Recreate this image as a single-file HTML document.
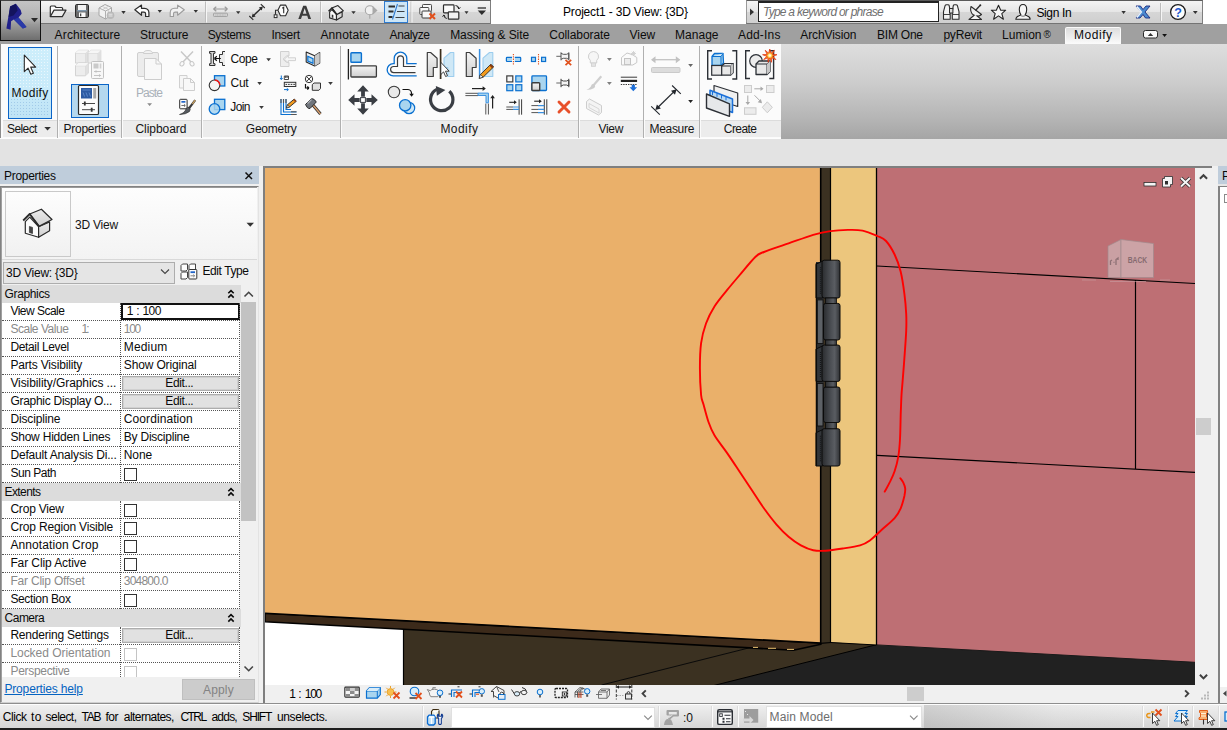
<!DOCTYPE html>
<html>
<head>
<meta charset="utf-8">
<title>Project1 - 3D View: {3D}</title>
<style>
*{box-sizing:border-box;margin:0;padding:0}
html,body{width:1227px;height:730px;overflow:hidden;background:#e6e6e6;font-family:"Liberation Sans",sans-serif;font-size:12px;color:#1a1a1a}
.a{position:absolute}
.t{position:absolute;white-space:nowrap;line-height:14px;height:14px}
svg{position:absolute;overflow:visible}
.ic{position:absolute;overflow:visible}
/* title */
#titlebar{left:0;top:0;width:1227px;height:24px;background:#fff}
#qat{left:40px;top:0;width:451px;height:24px;border-top:1px solid #5a5a5a;background:linear-gradient(#f4f4f4,#e6e6e6 48%,#d6d6d6 52%,#cfcfcf);border-right:1px solid #7e7e7e;border-bottom:1px solid #747474}
#appbtn{left:0;top:0;width:41px;height:41px;background:linear-gradient(#c4c4c4,#b2b2b2 45%,#9a9a9a 60%,#6e6e6e);border:1px solid #111;border-top:1px solid #444}
#info{left:746px;top:0;width:457px;height:24px;background:linear-gradient(#f4f4f4,#e6e6e6 48%,#d6d6d6 52%,#cfcfcf);border:1px solid #7e7e7e;border-bottom-color:#747474;border-top:1px solid #5a5a5a}
#search{left:758px;top:1px;width:181px;height:21px;background:#fff;border:1px solid #222;border-top-width:2px}
#tabbar{left:0;top:24px;width:1227px;height:20px;background:#a0a0a0}
#tabact{left:1065px;top:27px;width:56px;height:17px;background:linear-gradient(#dddddd,#ececec 50%,#fbfbfb);border:1px solid #fafafa;border-bottom:0;border-radius:2px 2px 0 0}
.vsep{position:absolute;width:1px;background:#b4b4b4;border-right:1px solid #f8f8f8;box-sizing:content-box}
/* ribbon */
#ribbon{left:0;top:44px;width:1227px;height:95px;background:linear-gradient(#dedede,#cdcdcd 40%,#b4b4b4 80%,#a5a5a5)}
.panel{position:absolute;top:44px;height:94px;background:#fbfbfb}
.ptitle{position:absolute;top:120px;height:17px;background:#ececec;border-top:1px solid #dcdcdc}
.psep{position:absolute;top:46px;width:1px;height:92px;background:#b0b0b0}
#optbar{left:0;top:139px;width:1227px;height:27px;background:#e3e3e3}
/* properties */
#prop{left:0;top:184px;width:259px;height:519px;background:#f0f0f0}
#prophead{left:0;top:166px;width:259px;height:18px;background:#bfcddb}
.row{position:absolute;left:2px;width:238px;height:18px;background:#fff;border-bottom:1px dotted #555}
.ghead{position:absolute;left:2px;width:238.500px;height:18px;background:#dcdcdc}
.cb{position:absolute;left:124px;width:13px;height:13px;background:#fff;border:1px solid #333}
.cbd{border-color:#c4c4c4}
.ebtn{position:absolute;left:122px;width:117px;height:15px;background:#e1e1e1;border:1px solid #adadad;box-shadow:inset 0 0 0 1px #d0d0d0}
/* status */
#status{left:0;top:703px;width:1227px;height:25px;background:linear-gradient(#efefef,#e4e4e4 45%,#d6d6d6);border-top:2px solid #fbfbfb}
#botstrip{left:0;top:728px;width:1227px;height:2px;background:#1e1e1e}

</style>
</head>
<body>
<!-- TITLE BAR + TABS -->
<div class="a" id="titlebar"></div>
<div class="a" id="tabbar"></div>
<div class="a" id="qat"></div>
<div class="a" id="appbtn"></div>
<div class="a" id="info"></div>
<div class="a" id="search"></div>
<div class="a" id="tabact"></div>
<div class="t" style="left:563.0px;top:5.0px;font-size:12px;color:#000;letter-spacing:-0.18px;">Project1 - 3D View: {3D}</div>
<div class="t" style="left:763.0px;top:5.0px;font-size:12px;color:#707070;letter-spacing:-0.75px;font-style:italic;">Type a keyword or phrase</div>
<div class="t" style="left:1036.4px;top:5.5px;font-size:12px;color:#000;letter-spacing:-0.36px;">Sign In</div>
<div class="t" style="left:54.6px;top:27.5px;font-size:12px;color:#0c0c0c;letter-spacing:0.15px;">Architecture</div>
<div class="t" style="left:140.0px;top:27.5px;font-size:12px;color:#0c0c0c;letter-spacing:-0.02px;">Structure</div>
<div class="t" style="left:207.7px;top:27.5px;font-size:12px;color:#0c0c0c;letter-spacing:-0.45px;">Systems</div>
<div class="t" style="left:271.4px;top:27.5px;font-size:12px;color:#0c0c0c;letter-spacing:-0.28px;">Insert</div>
<div class="t" style="left:320.4px;top:27.5px;font-size:12px;color:#0c0c0c;letter-spacing:0.14px;">Annotate</div>
<div class="t" style="left:389.6px;top:27.5px;font-size:12px;color:#0c0c0c;letter-spacing:-0.38px;">Analyze</div>
<div class="t" style="left:450.2px;top:27.5px;font-size:12px;color:#0c0c0c;letter-spacing:-0.09px;">Massing &amp; Site</div>
<div class="t" style="left:549.3px;top:27.5px;font-size:12px;color:#0c0c0c;letter-spacing:-0.07px;">Collaborate</div>
<div class="t" style="left:629.6px;top:27.5px;font-size:12px;color:#0c0c0c;letter-spacing:-0.06px;">View</div>
<div class="t" style="left:675.0px;top:27.5px;font-size:12px;color:#0c0c0c;letter-spacing:0.03px;">Manage</div>
<div class="t" style="left:738.0px;top:27.5px;font-size:12px;color:#0c0c0c;letter-spacing:0.17px;">Add-Ins</div>
<div class="t" style="left:800.3px;top:27.5px;font-size:12px;color:#0c0c0c;letter-spacing:-0.10px;">ArchVision</div>
<div class="t" style="left:877.0px;top:27.5px;font-size:12px;color:#0c0c0c;letter-spacing:-0.22px;">BIM One</div>
<div class="t" style="left:943.4px;top:27.5px;font-size:12px;color:#0c0c0c;letter-spacing:-0.20px;">pyRevit</div>
<div class="t" style="left:1002.0px;top:27.5px;font-size:12px;color:#0c0c0c;letter-spacing:0.03px;">Lumion</div>
<div class="t" style="left:1074.0px;top:27.5px;font-size:12px;color:#0c0c0c;letter-spacing:0.53px;">Modify</div>
<div class="t" style="left:1043.500px;top:28px;font-size:10px;color:#111">&#174;</div>
<svg class="a" style="left:0;top:0" width="1227" height="46" viewBox="0 0 1227 46">
<polygon points="15.9,3.7 10.1,6.4 6.4,28.6 10.6,29.7 11.1,21.2 13.8,19.6 22.8,28.6 26.5,27 18.5,17.5 21.7,13.8 20.7,10.1" fill="#20208a"/>
<polygon points="15.9,3.7 10.1,6.4 8.6,17 13.5,15.5 17.6,10.5" fill="#14145e"/>
<polygon points="13.8,19.6 22.8,28.6 26.5,27 18.5,17.5" fill="#2a3aa8"/>
<path d="M31 18h7l-3.5 4.2z" fill="#2a2a2a"/>
<path d="M50.3 16.6v-9.600q0-1 1-1h3.500l1.300 1.500h5.500q1 0 1 1v1.500" fill="#fdfdfd" stroke="#2e2e2e" stroke-width="1.2" stroke-linejoin="round"/>
<path d="M50.3 16.600l3.700-6.500h12l-3.700 6.500z" fill="#ececec" stroke="#2e2e2e" stroke-width="1.200" stroke-linejoin="round"/>
<rect x="75.5" y="4.500" width="13" height="13" rx="1.200" fill="#6a6a6a" stroke="#2a2a2a" stroke-width="1"/>
<rect x="78" y="5" width="8" height="5" fill="#f2f2f2"/>
<rect x="79" y="12.500" width="6.500" height="4.500" fill="#fafafa"/><rect x="80" y="13.500" width="1.300" height="2.800" fill="#444"/>
<path d="M77.200 10.800h9.600" stroke="#8fb6d8" stroke-width="0.900"/>
<path d="M99 8l6-3.500 6.500 3v7.500l-6 4-6.500-3.500z" fill="#f2f2f2" stroke="#a6a6a6" stroke-width="1"/><path d="M99 8l6.500 3 6-3M105.500 11v8" fill="none" stroke="#b0b0b0" stroke-width="1"/><path d="M102 6.300l6.300 3v7.500M108.800 6l-6.300 3.700" fill="none" stroke="#c4c4c4" stroke-width="0.800"/><circle cx="110.500" cy="15.300" r="3.800" fill="#b9b9b9"/><path d="M108.500 14.200h4M108.500 16h4" stroke="#eee" stroke-width="0.900"/>
<path d="M121.3 11.1h4.4l-2.2 2.8z" fill="#333"/>
<path d="M134.800 9.800l6.700-4.700v3.200h3q4.400 0.200 4.400 4.500v3.700h-3.300v-2.800q0-1.600-1.700-1.600h-2.400v3.200z" fill="#fdfdfd" stroke="#2c2c2c" stroke-width="1.200" stroke-linejoin="round"/>
<path d="M157.6 10h4.4l-2.2 2.8z" fill="#333"/>
<path d="M184.300 9.800l-6.700-4.700v3.200h-3q-4.400 0.200-4.400 4.500v3.700h3.300v-2.800q0-1.600 1.700-1.600h2.400v3.200z" fill="#f2f2f2" stroke="#9c9c9c" stroke-width="1.100" stroke-linejoin="round"/>
<path d="M193.6 10h4.4l-2.2 2.8z" fill="#333"/>
<path d="M205.500 1.500v21" stroke="#bdbdbd"/><path d="M206.500 1.500v21" stroke="#f6f6f6"/>
<path d="M213.500 9h14M213.500 9l2.800-2.200M213.500 9l2.800 2.200M227.500 9l-2.800-2.200M227.500 9l-2.800 2.200" stroke="#9a9a9a" stroke-width="1.200" fill="none"/><rect x="213.500" y="13.200" width="14" height="3.300" rx="0.800" fill="#d2d2d2" stroke="#9e9e9e" stroke-width="0.900"/><path d="M215.500 15h10" stroke="#a8a8a8" stroke-width="1" stroke-dasharray="0.800 0.800"/>
<path d="M236 11.2h4.4l-2.2 2.8z" fill="#333"/>
<path d="M252.500 16.500l9.500-9" stroke="#2c2c2c" stroke-width="1.400"/><path d="M249.300 16l4 3.800M260.800 4.200l4 3.800" stroke="#2c2c2c" stroke-width="1.100"/><path d="M251.700 17.400l1-4 3 3zM262.800 6.600l-1 4-3-3z" fill="#2c2c2c"/>
<path d="M277.900 10.300l2.600-5.200h5.100l2.600 5.200-2.600 5.400h-5.100z" fill="#fdfdfd" stroke="#2c2c2c" stroke-width="1.100" stroke-linejoin="round"/><path d="M282.200 8.300l1.500-1v6" stroke="#2c2c2c" stroke-width="1.100" fill="none"/><path d="M277.900 10.300h-2.400v4.500" stroke="#2c2c2c" stroke-width="1.100" fill="none"/><rect x="274.200" y="14.800" width="2.800" height="2.800" fill="#fff" stroke="#2c2c2c" stroke-width="1"/>
<path d="M298.300 19l4.900-13.200h3l4.900 13.200h-2.800l-1.100-3.200h-5.100l-1.100 3.200zM302.900 13.700h3.600l-1.800-5.400z" fill="#3c3c3c"/>
<path d="M320.500 1.500v21" stroke="#bdbdbd"/><path d="M321.500 1.500v21" stroke="#f6f6f6"/>
<g transform="translate(316.600 -102.200) scale(0.515)"><path d="M25.300 221.600l4.400-4.500 8.900 9.600v10.600l-13.300-4.100z" fill="#fbfbfb" stroke="#2a2a2a" stroke-width="2.200" stroke-linejoin="round"/><path d="M38.600 226.700l11-4.800v8.900l-11 6.500z" fill="#dadada" stroke="#2a2a2a" stroke-width="2.200" stroke-linejoin="round"/><path d="M29.700 214l11.700-4.800 10.600 10.300-13 6.900z" fill="#ececec" stroke="#2a2a2a" stroke-width="2.200" stroke-linejoin="round"/><path d="M23.200 220.500l6.500-6.500 9.300 12.400" fill="none" stroke="#2a2a2a" stroke-width="2.800" stroke-linejoin="round"/><path d="M29.400 226.400l3.100 1v6.200l-3.100-1.100z" fill="#333"/></g>
<path d="M351.3 11.2h4.4l-2.2 2.8z" fill="#333"/>
<circle cx="369.800" cy="10.300" r="4.500" fill="#f1f1f1" stroke="#a6a6a6" stroke-width="1.100"/><path d="M372.500 5.800l5 4.600-5 4.500z" fill="#a9a9a9"/><path d="M369.800 14.800v4" stroke="#a6a6a6" stroke-width="1.100"/>
<rect x="384.500" y="1.500" width="23" height="21" fill="#cde6f7" stroke="#2f7bd0" stroke-width="1"/>
<path d="M388.500 6.500h6.500M388.500 11.500h5M388.500 17h4" stroke="#2c2c2c" stroke-width="2.200"/><path d="M398.500 6h6M397 11.500h7.500M395.500 17.500h9" stroke="#2c2c2c" stroke-width="0.900"/><path d="M397.500 4l-5 15.500" stroke="#2f7bd0" stroke-width="1.100"/>
<path d="M411 1.500v21" stroke="#bdbdbd"/><path d="M412 1.500v21" stroke="#f6f6f6"/>
<rect x="422.500" y="4.500" width="9" height="7" rx="0.800" fill="#f8f8f8" stroke="#4a4a4a" stroke-width="1"/><rect x="419.800" y="7.500" width="9" height="7" rx="0.800" fill="#f8f8f8" stroke="#4a4a4a" stroke-width="1"/><rect x="422" y="11" width="9" height="7" rx="0.800" fill="#f8f8f8" stroke="#3a3a3a" stroke-width="1"/><path d="M429.500 13.500l5.500 5.500M435 13.500l-5.500 5.500" stroke="#e2501c" stroke-width="2"/>
<rect x="443.500" y="4.800" width="10.500" height="8" rx="0.800" fill="#fbfbfb" stroke="#2c2c2c" stroke-width="1.200"/><rect x="448.300" y="11.800" width="10.500" height="7.400" rx="0.800" fill="#f1f1f1" stroke="#2c2c2c" stroke-width="1.200"/><path d="M455.500 5.500q3.200 0.200 3.500 3.300M459 8.800l-1.500-1.400M459 8.800l1.300-1.500M446.800 18.500q-2.800-0.400-3-3.400M443.800 15.100l-1.300 1.500M443.800 15.100l1.500 1.400" stroke="#1c1c1c" stroke-width="1" fill="none"/>
<path d="M464.5 11.2h4l-2.0 2.7z" fill="#333"/>
<path d="M477.700 8h8.300" stroke="#2c2c2c" stroke-width="1.300"/><path d="M477.7 10.6h8.3l-4.15 4.3z" fill="#2c2c2c"/>
<path d="M746.5 0.500v22" stroke="#9a9a9a"/><path d="M750 8.500l4 3.500-4 3.500z" fill="#333"/>
<path d="M943.500 19.200v-7.500l1.600-6q0.300-1 1.400-1h1.500q1 0 1.200 1l1 6v7.500zM952.300 19.200v-7.500l1-6q0.200-1 1.200-1h1.500q1.100 0 1.400 1l1.600 6v7.500z" fill="#f4f4f4" stroke="#2c2c2c" stroke-width="1.100" stroke-linejoin="round"/><rect x="949.500" y="8.500" width="3.400" height="4.500" fill="#ddd" stroke="#2c2c2c" stroke-width="1"/><path d="M943.500 14.500h6.500M952.500 14.500h6.500" stroke="#2c2c2c" stroke-width="0.900"/>
<path d="M971 6.500q-1.500 5.500 2.500 8.500t8-0.500z" fill="#f0f0f0" stroke="#2c2c2c" stroke-width="1.100" stroke-linejoin="round"/><path d="M975.500 10.500l4.500-5" stroke="#2c2c2c" stroke-width="1.300"/><circle cx="980.300" cy="5.300" r="1" fill="#2c2c2c"/><path d="M974.500 15l-5.500 4.500h12.500l-5-4" fill="#f6f6f6" stroke="#2c2c2c" stroke-width="1.100" stroke-linejoin="round"/>
<path d="M998.500 5.200l2.200 5h5l-3.900 3.400 1.600 5.600-4.900-3.300-4.900 3.300 1.600-5.600-3.900-3.400h5z" fill="#f6f6f6" stroke="#222" stroke-width="1.100" stroke-linejoin="round"/>
<path d="M1015.800 19.300q0.200-2.600 3.200-3.500l2-0.800q-1.700-2-1.700-5.500 0-5 3.700-5t3.700 5q0 3.500-1.700 5.500l2 0.800q3 0.900 3.200 3.500z" fill="#f6f6f6" stroke="#222" stroke-width="1.100" stroke-linejoin="round"/><path d="M1021 15.500q2 1.500 4 0" stroke="#999" stroke-width="1.400" fill="none"/>
<path d="M1121.4 11.1h4.4l-2.2 2.8z" fill="#333"/>
<path d="M1136 6h4.500l2.500 3.500 3-3.500h4l-5 6 5 6h-4.500l-2.500-3.500-3 3.500h-4l5-6z" fill="#4a8ad0" stroke="#1c2a80" stroke-width="0.900" stroke-linejoin="round"/><path d="M1136.800 6.500l4.500 5.500-4.500 5.500" fill="none" stroke="#e8f0fa" stroke-width="1.600"/>
<path d="M1160.500 3v18" stroke="#bdbdbd"/><path d="M1161.500 3v18" stroke="#f6f6f6"/>
<circle cx="1178" cy="12" r="7.400" fill="#fdfdfd" stroke="#1c1c1c" stroke-width="1.300"/><text x="1178" y="16.500" font-family="Liberation Sans, sans-serif" font-size="12.500" font-weight="bold" fill="#1c5ad0" text-anchor="middle">?</text>
<path d="M1192.9 11.1h4.8l-2.4 3z" fill="#333"/>
<rect x="1143.500" y="30.500" width="14" height="7.500" rx="2" fill="#fafafa" stroke="#2a2a2a" stroke-width="1"/><path d="M1147.800 36l2.700-3 2.700 3z" fill="#333"/><path d="M1162.2 33.9h4.8l-2.4 3z" fill="#111"/>
</svg>
<!-- RIBBON -->
<div class="a" id="ribbon"></div>
<div class="a" style="left:0;top:44px;width:781px;height:95px;background:#fbfbfb"></div>
<div class="a" style="left:0;top:44px;width:1px;height:95px;background:#8c8c8c"></div>
<div class="ptitle" style="left:3px;width:54px"></div>
<div class="ptitle" style="left:59px;width:62px"></div>
<div class="ptitle" style="left:123px;width:78px"></div>
<div class="ptitle" style="left:203px;width:137px"></div>
<div class="ptitle" style="left:342px;width:236px"></div>
<div class="ptitle" style="left:580px;width:63px"></div>
<div class="ptitle" style="left:645px;width:54px"></div>
<div class="ptitle" style="left:701px;width:80px"></div>
<div class="psep" style="left:57px"></div>
<div class="psep" style="left:121px"></div>
<div class="psep" style="left:201px"></div>
<div class="psep" style="left:340px"></div>
<div class="psep" style="left:578px"></div>
<div class="psep" style="left:643px"></div>
<div class="psep" style="left:699px"></div>
<div class="a" style="left:0;top:138px;width:781px;height:1px;background:#fdfdfd"></div>
<div class="a" id="optbar"></div>
<div class="a" style="left:8px;top:47px;width:44px;height:72px;background:linear-gradient(#cdeefb,#c9ebfa 55%,#bfe3f5);border:1px solid #0a64c8"></div>
<div class="a" style="left:10px;top:49px;width:40px;height:40px;background-image:radial-gradient(rgba(255,255,255,0.6) 0.6px,rgba(255,255,255,0) 0.9px);background-size:3px 3px"></div>
<div class="a" style="left:10px;top:98px;width:40px;height:19px;background-image:radial-gradient(rgba(120,170,215,0.45) 0.6px,rgba(120,170,215,0) 0.9px);background-size:3px 3px"></div>
<div class="a" style="left:71px;top:84px;width:38px;height:34px;background:#b4d8ef;border:1px solid #0a64c8"></div>
<div class="t" style="left:11.5px;top:86.0px;font-size:12px;color:#101010;letter-spacing:0.27px;">Modify</div>
<div class="t" style="left:7.1px;top:121.5px;font-size:12px;color:#151515;letter-spacing:-0.61px;">Select</div>
<div class="t" style="left:63.6px;top:121.5px;font-size:12px;color:#151515;letter-spacing:-0.28px;">Properties</div>
<div class="t" style="left:135.4px;top:121.5px;font-size:12px;color:#151515;letter-spacing:-0.03px;">Clipboard</div>
<div class="t" style="left:245.8px;top:121.5px;font-size:12px;color:#151515;letter-spacing:-0.23px;">Geometry</div>
<div class="t" style="left:440.4px;top:121.5px;font-size:12px;color:#151515;letter-spacing:0.45px;">Modify</div>
<div class="t" style="left:598.5px;top:121.5px;font-size:12px;color:#151515;letter-spacing:-0.30px;">View</div>
<div class="t" style="left:649.5px;top:121.5px;font-size:12px;color:#151515;letter-spacing:-0.31px;">Measure</div>
<div class="t" style="left:723.8px;top:121.5px;font-size:12px;color:#151515;letter-spacing:-0.56px;">Create</div>
<div class="t" style="left:135.9px;top:85.8px;font-size:12px;color:#a9b0b8;letter-spacing:-0.90px;">Paste</div>
<div class="t" style="left:230.6px;top:51.7px;font-size:12px;color:#101010;letter-spacing:-0.43px;">Cope</div>
<div class="t" style="left:230.6px;top:75.7px;font-size:12px;color:#101010;letter-spacing:-0.34px;">Cut</div>
<div class="t" style="left:230.3px;top:99.8px;font-size:12px;color:#101010;letter-spacing:-0.64px;">Join</div>
<svg class="a" style="left:0;top:0" width="1227" height="140" viewBox="0 0 1227 140">
<defs><linearGradient id="gg" x1="0" y1="0" x2="0" y2="1"><stop offset="0" stop-color="#f4f4f4"/><stop offset="1" stop-color="#cfcfcf"/></linearGradient></defs>
<path d="M24.300 55.200v16.500l3.800-3.600 2.700 6.200 2.600-1.100-2.700-6.100h5z" fill="#fff" stroke="#2a2a2a" stroke-width="1.100" stroke-linejoin="round"/>
<path d="M44.3 127h6.5l-3.25 3.6z" fill="#333"/>
<path d="M75.5 53.099999999999994l2.8 -2.8h10v10l-2.8 2.8h-10z" fill="#ededed" stroke="#cfcfcf" stroke-width="0.900" stroke-linejoin="round"/><path d="M75.5 53.099999999999994h10l2.8 -2.8M85.5 53.099999999999994v10" fill="none" stroke="#d6d6d6" stroke-width="0.800"/><path d="M85.5 53.099999999999994l2.8 -2.8v10l-2.8 2.8z" fill="#e0e0e0"/><path d="M75.5 53.099999999999994l2.8 -2.8h10l-2.8 2.8z" fill="#f6f6f6"/><path d="M88 53.099999999999994l2.8 -2.8h10v10l-2.8 2.8h-10z" fill="#ededed" stroke="#cfcfcf" stroke-width="0.900" stroke-linejoin="round"/><path d="M88 53.099999999999994h10l2.8 -2.8M98 53.099999999999994v10" fill="none" stroke="#d6d6d6" stroke-width="0.800"/><path d="M98 53.099999999999994l2.8 -2.8v10l-2.8 2.8z" fill="#e0e0e0"/><path d="M88 53.099999999999994l2.8 -2.8h10l-2.8 2.8z" fill="#f6f6f6"/><path d="M75.5 65.8l2.8 -2.8h10v10l-2.8 2.8h-10z" fill="#ededed" stroke="#cfcfcf" stroke-width="0.900" stroke-linejoin="round"/><path d="M75.5 65.8h10l2.8 -2.8M85.5 65.8v10" fill="none" stroke="#d6d6d6" stroke-width="0.800"/><path d="M85.5 65.8l2.8 -2.8v10l-2.8 2.8z" fill="#e0e0e0"/><path d="M75.5 65.8l2.8 -2.8h10l-2.8 2.8z" fill="#f6f6f6"/>
<rect x="91.500" y="61.500" width="12" height="17" rx="1" fill="#f7f7f7" stroke="#c2c2c2" stroke-width="1"/><rect x="93.500" y="63.500" width="5" height="5" fill="#cacaca"/><path d="M100.500 63.500v5" stroke="#d0d0d0" stroke-width="1.600"/><path d="M94 71.500h7M94 75.500h7M96 70.300v2.400M99.500 74.300v2.400" stroke="#bdbdbd" stroke-width="0.900"/>
<rect x="78.500" y="85.500" width="20" height="29" rx="1" fill="#fbfbfb" stroke="#2a2a2a" stroke-width="1.200"/><rect x="81" y="88" width="11" height="10.500" fill="#2c5aa2"/><path d="M82.500 90h8M83 92.500l1.500 4M86 92.500l1.500 4M89 92.500l1.500 4" stroke="#6f9ad8" stroke-width="0.700" fill="none"/><rect x="93.200" y="88" width="3" height="10.500" fill="#a8a8a8"/><path d="M82 103.500h13M82 109.700h13" stroke="#333" stroke-width="0.900"/><path d="M84.800 101.500v4M91.700 107.700v4" stroke="#333" stroke-width="1.800"/>
<rect x="137.500" y="52.500" width="21" height="24" rx="1.500" fill="#ececec" stroke="#cfcfcf" stroke-width="1"/><path d="M143.500 53.500q0-3 4.500-3t4.500 3z" fill="#f2f2f2" stroke="#cfcfcf" stroke-width="1"/><path d="M144.500 58.500h11.500l5.500 5.500v15.500h-17z" fill="#f8f8f8" stroke="#cdcdcd" stroke-width="1"/><path d="M156 58.500v5.500h5.500" fill="none" stroke="#cdcdcd" stroke-width="1"/>
<path d="M147.2 103.3h4.8l-2.4 2.8z" fill="#8a8a8a"/>
<path d="M181 51.500l10.500 11M193 51.500l-10.500 11" stroke="#c8c8c8" stroke-width="1.500"/><ellipse cx="182" cy="63.800" rx="1.900" ry="2.300" transform="rotate(35 182 63.800)" fill="#fafafa" stroke="#c8c8c8" stroke-width="1"/><ellipse cx="192" cy="63.800" rx="1.900" ry="2.300" transform="rotate(-35 192 63.800)" fill="#fafafa" stroke="#c8c8c8" stroke-width="1"/>
<path d="M179.500 75.500h7.500v12.500h-7.500z" fill="#f6f6f6" stroke="#d0d0d0"/><path d="M183.500 78.500h7l4 4v8h-11z" fill="#f8f8f8" stroke="#cdcdcd"/><path d="M190.500 78.500v4h4" fill="none" stroke="#cdcdcd"/>
<rect x="179.700" y="99.300" width="7.400" height="9.500" rx="0.800" fill="#fbfbfb" stroke="#2a2a2a" stroke-width="1"/><rect x="181.400" y="101" width="4" height="1.700" fill="#1e63c8"/><path d="M181.400 105.500h3.500M184 104.300l1.300 1.200-1.300 1.200" stroke="#333" stroke-width="0.700" fill="none"/><path d="M195.200 100.200l-6.800 9" stroke="#3a3a3a" stroke-width="2.200"/><path d="M195.200 100.200l-2.800 3.700" stroke="#c8a060" stroke-width="1.300"/><path d="M189.300 107.500q1.800 1.800 0.200 4-3.500 3-10 3 5.500-1.500 6.800-6.300 1.500-1.700 3-0.700z" fill="#55595e" stroke="#2a2a2a" stroke-width="0.600"/>
<path d="M209.500 51.500h5.500v1.800h-1.500v10.400h1.500v1.800h-5.500v-1.800h1.500v-10.400h-1.500z" fill="#d8d8d8" stroke="#333" stroke-width="1" stroke-linejoin="round"/><path d="M225 51.500h-2.500v3h-3v8h3v3h2.500" fill="#ececec" stroke="#333" stroke-width="1" stroke-linejoin="round"/><path d="M214.300 58.500h6.500M214.300 58.500l2.500-2.200M214.300 58.500l2.500 2.200" stroke="#111" stroke-width="1.200" fill="none"/>
<path d="M266.3 58.2h4.6l-2.3 3z" fill="#3a3a3a"/>
<rect x="214.500" y="75.700" width="10.300" height="10.300" fill="#a9d5ef" stroke="#0a70d0" stroke-width="1.300"/><circle cx="214.500" cy="85.300" r="5.300" fill="#f4f4f4" stroke="#333" stroke-width="1.100"/><path d="M214.700 80q4.800 0.400 5.100 5" stroke="#f01818" stroke-width="1.500" fill="none"/>
<path d="M257.3 82h4.6l-2.3 3z" fill="#3a3a3a"/>
<rect x="214.500" y="99.300" width="10.300" height="10.300" fill="#a9d5ef" stroke="#0a70d0" stroke-width="1.300"/><circle cx="214.500" cy="109" r="5.300" fill="#a9d5ef" fill-opacity="0.850" stroke="#0a70d0" stroke-width="1.300"/>
<path d="M259.2 106h4.6l-2.3 3z" fill="#3a3a3a"/>
<path d="M280.500 51.500h8.500v4.500h-2.500l-3.500 3.200 3.500 3.200h2.500v4.100h-8.500z" fill="#eeeeee" stroke="#d0d0d0" stroke-width="1" stroke-linejoin="round"/><path d="M284.300 59.200l4-3.700v2.300h7.200v2.800h-7.200v2.300z" fill="#f6f6f6" stroke="#cdcdcd" stroke-width="0.900" stroke-linejoin="round"/>
<path d="M306.200 52l8.500 3.800 5-3.300v10.500l-5 3-8.500-4z" fill="#f2f2f2" stroke="#2a2a2a" stroke-width="1.100" stroke-linejoin="round"/><path d="M314.700 55.800v10.200" stroke="#2a2a2a" stroke-width="1" /><path d="M314.700 55.800l5-3.300v10.500l-5 3z" fill="#c8c8c8"/><path d="M307.800 56.300l5.200 2.300v4.700l-5.200-2.300z" fill="#a9d5ef" stroke="#0a70d0" stroke-width="1.200"/>
<path d="M281.300 75.500v4M281.300 79.500l-1.300-1.500M281.300 79.500l1.300-1.500" stroke="#0a70d0" stroke-width="1" fill="none"/><path d="M284.300 76h4.200v3.500h-4.200zM285.700 76v2M287.100 76v2" stroke="#333" stroke-width="0.900" fill="none"/><rect x="284.300" y="82.300" width="11.500" height="4.200" fill="#f6f6f6" stroke="#333" stroke-width="1"/><path d="M285.500 84.400h9.500" stroke="#333" stroke-width="1" stroke-dasharray="1.600 1"/><path d="M284 89.600h4.300M288.300 89.600l-1.500-1.300M288.300 89.600l-1.500 1.300" stroke="#0a70d0" stroke-width="1" fill="none"/>
<circle cx="309" cy="79" r="3.700" fill="#fafafa" stroke="#333" stroke-width="1"/><path d="M306.400 76.400l5.200 5.200M311.600 76.400l-5.200 5.200" stroke="#333" stroke-width="0.900"/><path d="M305.500 84v4h3.500M309 88l-1.700-1.500M309 88l-1.700 1.500" stroke="#111" stroke-width="1.200" fill="none"/><path d="M312.300 84.700l1.600-1.700h6.600v5.500l-1.600 1.800h-6.600z" fill="#e0e0e0" stroke="#333" stroke-width="1" stroke-linejoin="round"/>
<path d="M328.2 82h4.6l-2.3 3z" fill="#3a3a3a"/>
<path d="M281 99v15.500h15.500M283.500 99v13h13M286 99v10.500h5" stroke="#0a70d0" stroke-width="1.100" fill="none"/><path d="M281 99v4M283.500 99v4M286 99v4" stroke="#555" stroke-width="1.100"/><path d="M291 111.700h5.500M291 114.500h5.500" stroke="#555" stroke-width="1.100"/><path d="M286.500 108l1-3.300 6.800-5.700 2 2.300-6.800 5.700z" fill="#f09a20" stroke="#2a2a2a" stroke-width="0.900" stroke-linejoin="round"/><path d="M286.500 108l1-3.300 2 2.300z" fill="#fff" stroke="#2a2a2a" stroke-width="0.700"/><path d="M294.300 99l2 2.300-1.100 0.900-2-2.300z" fill="#a04818"/>
<path d="M312.500 104.500l8 9.500" stroke="#2a2a2a" stroke-width="3"/><path d="M312.500 104.500l8 9.500" stroke="#d8a070" stroke-width="1.500"/><path d="M305.500 104.500l5.500-5.500q2-0.700 3.500 0.800l1.800 2.200-6.300 6.500q-1.500 0.300-2.700-1z" fill="#70757c" stroke="#2a2a2a" stroke-width="1" stroke-linejoin="round"/><path d="M307.500 103.500l4-4" stroke="#a9aeb4" stroke-width="1.300"/>
<path d="M348.400 49v30.500" stroke="#222" stroke-width="1.300"/><rect x="350.900" y="52.700" width="10.500" height="9.500" rx="0.800" fill="#a9d5ef" stroke="#0a70d0" stroke-width="1.400"/><rect x="350.900" y="65.800" width="25.500" height="11.200" rx="0.800" fill="url(#gg)" stroke="#3c3c3c" stroke-width="1.300"/>
<path d="M416.700 63.700H406.800V58.500a6.300 6.300 0 0 0-12.600 0V63.700h-1a6.050 6.050 0 0 0 0 12.100h23.500" fill="none" stroke="#0a70d0" stroke-width="1.300"/><path d="M415.500 66.500h-12v-7.700a3 3 0 0 0-6 0v7.700h-3.800a3.100 3.100 0 0 0 0 6.200h21.800" fill="none" stroke="#3c3c3c" stroke-width="1.200"/>
<path d="M427.300 52.500h3.300l6.500 5.700v9.300h-3.800v9h-6z" fill="url(#gg)" stroke="#3c3c3c" stroke-width="1.200" stroke-linejoin="round"/>
<path d="M453.800 52.500h-3.300l-6.500 5.700v9.300h3.800v9h6z" fill="#cfe8f6" stroke="#9ccdee" stroke-width="1.100" stroke-linejoin="round"/>
<path d="M440.600 49v30" stroke="#3a2e1c" stroke-width="1.700"/>
<path d="M440.800 62.300v12.200l2.800-2.600 2 4.600 1.900-0.800-2-4.500h3.700z" fill="#fff" stroke="#2a2a2a" stroke-width="0.900" stroke-linejoin="round"/>
<path d="M363 85.200l5.800 6.300h-3.900v5.200h-3.800v-5.200h-3.900zM363 114.800l5.800-6.300h-3.900v-5.200h-3.800v5.200h-3.900zM348.200 100l6.300-5.800v3.900h5.200v3.800h-5.200v3.900zM377.800 100l-6.300-5.800v3.900h-5.200v3.800h5.200v3.900z" fill="#3a3e44"/><rect x="360.600" y="97.600" width="4.800" height="4.800" fill="#fff" stroke="#3a3e44" stroke-width="1"/>
<circle cx="394" cy="92" r="5.700" fill="#e9e9e9" stroke="#3c3c3c" stroke-width="1.100"/><path d="M402.500 89.500h5.500q3.500 0.300 3.600 4.500" fill="none" stroke="#111" stroke-width="1.200"/><path d="M409.300 93.800h4.600l-2.300 3z" fill="#111"/><circle cx="409" cy="108" r="5.700" fill="#cfe8f6" stroke="#0a70d0" stroke-width="1.200"/><circle cx="405.200" cy="105.300" r="5.700" fill="#a9d5ef" stroke="#0a70d0" stroke-width="1.300"/>
<path d="M449.300 91.200a11.200 11.200 0 1 1-12.500-1.800" fill="none" stroke="#3a3e44" stroke-width="3.200"/><path d="M435.800 86l9.600 3.900-8.500 5.800z" fill="#3a3e44"/>
<path d="M466.300 52.500h3.300l6.500 5.700v9.300h-3.800v9h-6z" fill="url(#gg)" stroke="#3c3c3c" stroke-width="1.200" stroke-linejoin="round"/>
<path d="M492.800 52.500h-3.300l-6.500 5.700v18.300h9.800z" fill="#cfe8f6" stroke="#9ccdee" stroke-width="1.100" stroke-linejoin="round"/>
<path d="M479.600 49v28.500" stroke="#3a90e0" stroke-width="1.500"/>
<path d="M479.200 78.300l1.200-3.800 10.500-10.300 2.700 2.700-10.500 10.300z" fill="#f29a1c" stroke="#2a2a2a" stroke-width="0.900" stroke-linejoin="round"/><path d="M479.200 78.300l1.200-3.800 2.700 2.700z" fill="#fff" stroke="#2a2a2a" stroke-width="0.700"/><path d="M490.900 64.200l2.700 2.700-1.500 1.400-2.700-2.700z" fill="#8a3a10"/>
<path d="M472 88.600h13" stroke="#222" stroke-width="1.200"/><path d="M485.800 88.600l-3.200-2.300v4.600z" fill="#222"/><path d="M465.400 93.300h12.600M465.400 95.600h12.600M485.800 103.500v11M488.400 103.500v11" stroke="#555" stroke-width="1"/><path d="M478 93.100h10.400v9.700h-2.400v-7.300h-8z" fill="#a9d5ef" stroke="#3a90e0" stroke-width="1"/><path d="M492.600 108.600v-12" stroke="#222" stroke-width="1.200"/><path d="M492.600 95l-2.300 3.200h4.600z" fill="#222"/>
<rect x="506.400" y="57.300" width="14.300" height="4.200" rx="0.700" fill="#a9d5ef" stroke="#0a70d0" stroke-width="1.200"/><rect x="512" y="56" width="2.800" height="7" fill="#fbfbfb"/><path d="M513.400 54v11" stroke="#e0501c" stroke-width="1.100" stroke-dasharray="1.300 1"/>
<rect x="531.500" y="57.300" width="4" height="4.200" fill="#a9d5ef" stroke="#0a70d0" stroke-width="1.200"/><rect x="541.600" y="57.300" width="4" height="4.200" fill="#a9d5ef" stroke="#0a70d0" stroke-width="1.200"/><path d="M538.500 54v11" stroke="#e0501c" stroke-width="1.100" stroke-dasharray="1.300 1"/>
<path d="M556.300 56.300h4.700" stroke="#666" stroke-width="1"/><path d="M561 52.300v8M561 53.300l2.300 1h3.200l2.300-1v6l-2.300-1h-3.200l-2.300 1M568.800 52.300v8" fill="#f4f4f4" stroke="#555" stroke-width="1"/><path d="M565.500 59.800l5.700 5.400M571.200 59.800l-5.700 5.400" stroke="#e0501c" stroke-width="1.700"/>
<rect x="506.800" y="75.900" width="6" height="6" fill="#f8f8f8" stroke="#3c3c3c" stroke-width="1.200"/><rect x="515.800" y="75.900" width="6" height="6" fill="#a9d5ef" stroke="#0a70d0" stroke-width="1.200"/><rect x="506.800" y="84.700" width="6" height="6" fill="#a9d5ef" stroke="#0a70d0" stroke-width="1.200"/><rect x="515.800" y="84.700" width="6" height="6" fill="#a9d5ef" stroke="#0a70d0" stroke-width="1.200"/>
<rect x="531.900" y="75.900" width="14.600" height="14.600" rx="0.800" fill="#a9d5ef" stroke="#0a70d0" stroke-width="1.300"/><rect x="531.900" y="82.700" width="7.800" height="7.800" rx="0.800" fill="url(#gg)" stroke="#3c3c3c" stroke-width="1.400"/>
<path d="M556.300 83h4.700" stroke="#666" stroke-width="1"/><path d="M561 78.800v8.400M561 80l2.300 1h3.200l2.300-1v6l-2.300-1h-3.200l-2.300 1M568.800 78.800v8.400" fill="#f4f4f4" stroke="#444" stroke-width="1"/>
<path d="M509.200 102.300h6" stroke="#222" stroke-width="1.100"/><path d="M516.800 102.300l-2.800-2v4z" fill="#222"/><path d="M519.100 99.300v15.400M521.600 99.300v15.400" stroke="#3c3c3c" stroke-width="1"/><path d="M506.300 107h6.700M506.300 109.400h6.700" stroke="#555" stroke-width="1"/><path d="M513 107h6M513 109.400h6" stroke="#3a90e0" stroke-width="1.100"/>
<path d="M534.200 101.200h6" stroke="#222" stroke-width="1.100"/><path d="M541.800 101.200l-2.800-2v4z" fill="#222"/><path d="M544.300 99.300v15.400M546.800 99.300v15.400" stroke="#3c3c3c" stroke-width="1"/><path d="M531.400 105.600h6.700M531.400 109.400h6.700M531.400 112.600h6.700" stroke="#555" stroke-width="1"/><path d="M538 105.600h6.300M538 109.400h6.300M538 112.600h6.300" stroke="#3a90e0" stroke-width="1.100"/>
<path d="M559 102l10 10M569 102l-10 10" stroke="#e8502a" stroke-width="2.900" stroke-linecap="round"/>
<path d="M593.500 51.500a5 5 0 0 1 3.200 8.900v2.600h-6.400v-2.600a5 5 0 0 1 3.200-8.900z" fill="#f6f6f6" stroke="#cfcfcf" stroke-width="1"/><rect x="591.500" y="63" width="4" height="3.300" fill="#e4e4e4" stroke="#cfcfcf" stroke-width="0.800"/>
<path d="M607 58.1h4.8l-2.4 3z" fill="#808080"/>
<path d="M621.500 57.500l5.500-4.500 5 1.500 4.800 3v5l-4 2.500h-11.300z" fill="none" stroke="#c8c8c8" stroke-width="1"/><rect x="624.500" y="58.500" width="6" height="6" fill="#ececec" stroke="#c4c4c4" stroke-width="1"/><path d="M633.500 51v5M631 53.500h5M631.800 51.800l3.400 3.400M635.200 51.800l-3.400 3.400" stroke="#d0d0d0" stroke-width="0.900"/>
<path d="M601.300 76.300l-8 9.200" stroke="#cfcfcf" stroke-width="2.200"/><path d="M594.300 84.500q1.700 1.700 0 3.500-3 2-8 2 4.300-1.800 5.300-5.300 1.300-1.300 2.700-0.200z" fill="#cdcdcd"/>
<path d="M607 82h4.8l-2.4 3z" fill="#808080"/>
<path d="M620.800 77.200h16.300" stroke="#222" stroke-width="0.900"/><path d="M620.800 80.900h16.300" stroke="#222" stroke-width="2.200"/><path d="M620.800 84.500h16.300" stroke="#222" stroke-width="0.900" stroke-dasharray="1.400 1"/><path d="M631.700 84.800h3.200v2.500h2.200l-3.800 4-3.800-4h2.200z" fill="#1e6fd8"/>
<path d="M586.500 101.500l3-2.500 12 6.500v7l-3 2.500-12-6.500z" fill="#f4f4f4" stroke="#cdcdcd" stroke-width="1" stroke-linejoin="round"/><path d="M589 103.500l10 5.500v4M589 103.500v4l10 5.500" fill="none" stroke="#d4d4d4" stroke-width="0.900"/>
<path d="M652 59.700h27.500" stroke="#c2c2c2" stroke-width="1.300"/><path d="M651 59.700l4.500-3.500v7zM680.300 59.700l-4.500-3.500v7z" fill="#c2c2c2"/><rect x="651.500" y="67.500" width="28.500" height="5" rx="1" fill="#dcdcdc" stroke="#c6c6c6" stroke-width="0.900"/>
<path d="M688.2 64h4.8l-2.4 3z" fill="#666"/>
<path d="M657 108.200l17.800-17.300" stroke="#23272d" stroke-width="1.300"/><path d="M651.200 106.300l8.600 8.300M672.100 85.500l8.700 8.300" stroke="#23272d" stroke-width="1.100"/><path d="M655.300 110l1.600-5.500 4 4zM676.600 89.200l-1.600 5.500-4-4z" fill="#23272d"/>
<path d="M688.2 100.1h4.8l-2.4 3z" fill="#222"/>
<path d="M712.0 50.8h-4.300v28.200000000000003h4.300M732.3000000000001 50.8h4.300v28.200000000000003h-4.300" fill="none" stroke="#2c3036" stroke-width="1.400"/>
<path d="M712 56.500l2.500-3h8.500l0.500 9.500-2.500 2.500h-9z" fill="#a9d5ef" stroke="#0a70d0" stroke-width="1.300" stroke-linejoin="round"/><path d="M712 56.500h9l2-3" fill="#d8ecf9" stroke="#0a70d0" stroke-width="1"/><path d="M721 56.500v9" stroke="#0a70d0" stroke-width="1"/>
<rect x="711.700" y="65.500" width="10" height="9.700" fill="#e8e8e8" stroke="#2c3036" stroke-width="1.200"/><path d="M721.700 66l2.800-2.500h8.800v9l-2.800 2.700h-8.800z" fill="#e8e8e8" stroke="#2c3036" stroke-width="1.200" stroke-linejoin="round"/><path d="M721.700 66h8.800l2.800-2.500M730.500 66v9.200" fill="none" stroke="#2c3036" stroke-width="1"/><path d="M730.500 66l2.800-2.500v9l-2.800 2.700z" fill="#c6c6c6"/>
<path d="M750.0 50.8h-4.300v27.700000000000003h4.300M769.3000000000001 50.8h4.300v27.700000000000003h-4.300" fill="none" stroke="#2c3036" stroke-width="1.400"/>
<circle cx="756" cy="61" r="6.300" fill="#ececec" stroke="#2c3036" stroke-width="1.200"/><path d="M756 64l3-3h11l0 10.500-3 3h-11z" fill="#e8e8e8" stroke="#2c3036" stroke-width="1.300" stroke-linejoin="round"/><path d="M756 64h11l3-3M767 64v10.500" fill="none" stroke="#2c3036" stroke-width="1"/><path d="M767 64l3-3v10.500l-3 3z" fill="#c6c6c6"/>
<path d="M769.800 49l1.200 4.200 3.400-2.900-1.900 4.100 4.500 0.300-4.200 1.600 3.100 3.300-4.100-1.800-0.300 4.500-1.700-4.200-1.700 4.200-0.300-4.500-4.100 1.800 3.100-3.300-4.200-1.600 4.500-0.300-1.900-4.100 3.400 2.900z" fill="#f8901c" stroke="#e0280c" stroke-width="0.700" stroke-linejoin="round"/><circle cx="769.800" cy="55.500" r="2.300" fill="#ffd860"/><circle cx="769.800" cy="55.500" r="1.200" fill="#fffbe8"/>
<path d="M714 85.500l23.700 7.500v13.500l-23.700-7.500z" fill="#f0f0f0" stroke="#2c3036" stroke-width="1.200" stroke-linejoin="round"/><path d="M710 90.300l22.500 8.700v13.500l-22.500-8.700z" fill="#b8d8f2" stroke="#1a6fd8" stroke-width="1.500" stroke-linejoin="round"/><path d="M706.500 94l23 9.800v12.500l-23-8.300z" fill="#e6e8ea" stroke="#2c3036" stroke-width="1.400" stroke-linejoin="round"/><path d="M712.500 91.500v3.500M717 93.300v3.500M721.500 95v3.500M726 96.800v3.500" stroke="#1a6fd8" stroke-width="1"/>
<g fill="#ececec" stroke="#cdcdcd" stroke-width="1"><rect x="744.500" y="85.500" width="7" height="7"/><rect x="766.500" y="85.500" width="7.500" height="7"/><rect x="744.500" y="107.800" width="11.500" height="6.500"/><path d="M767.300 101.800l5 5.500-5 5.500-5-5.500z"/></g><path d="M754.300 88.800h8M747.800 95.500v8M754.500 95.300l6 6" stroke="#a9a9a9" stroke-width="1"/><path d="M763.500 88.800l-3-2.300v4.600zM747.800 105l-2.300-3h4.600zM762 103.300l-4.300-1 3.200-3.200z" fill="#a9a9a9"/>
</svg>
<!-- PROPERTIES PALETTE -->
<div class="a" id="prop"></div>
<div class="a" id="prophead"></div>
<div class="t" style="left:4.0px;top:169.0px;font-size:12px;color:#0a0a0a;letter-spacing:-0.30px;">Properties</div>
<svg class="a" style="left:244px;top:171px" width="10" height="10" viewBox="0 0 10 10"><path d="M1.500 1.500l6.500 6.500M8 1.500l-6.500 6.500" stroke="#111" stroke-width="1.500"/></svg>
<div class="a" style="left:0;top:186px;width:259px;height:517px;border:1px solid #828282;border-right-color:#e3e3e3;border-bottom-color:#d0d0d0;background:#f0f0f0"></div>
<div class="a" style="left:1px;top:187px;width:1px;height:515px;background:#a0a0a0"></div>
<div class="a" style="left:1px;top:187px;width:256px;height:1px;background:#9a9a9a"></div>
<div class="a" style="left:2px;top:188px;width:255px;height:72px;background:linear-gradient(#fdfdfd,#f3f3f3)"></div>
<div class="a" style="left:5px;top:191px;width:66px;height:66px;background:linear-gradient(#fdfdfd,#f1f1f1);border:1px solid #c9c9c9"></div>
<div class="t" style="left:75.0px;top:217.7px;font-size:12px;color:#151515;letter-spacing:-0.21px;">3D View</div>
<svg class="a" style="left:246px;top:222px" width="9" height="6" viewBox="0 0 9 6"><path d="M0.500 0.800h7.500l-3.750 4z" fill="#333"/></svg>
<div class="a" style="left:2px;top:259px;width:255px;height:1px;background:#d9d9d9"></div>
<svg class="a" style="left:20px;top:206px" width="36" height="36" viewBox="20 206 36 36"><defs><linearGradient id="hr" x1="0" y1="0" x2="0" y2="1"><stop offset="0" stop-color="#ececec"/><stop offset="1" stop-color="#cfcfcf"/></linearGradient></defs><path d="M25.300 221.600l4.400-4.500 8.900 9.600v10.600l-13.300-4.100z" fill="#fbfbfb" stroke="#2a2a2a" stroke-width="1.200" stroke-linejoin="round"/><path d="M38.600 226.700l11-4.800v8.900l-11 6.500z" fill="url(#hr)" stroke="#2a2a2a" stroke-width="1.200" stroke-linejoin="round"/><path d="M29.700 214l11.700-4.800 10.600 10.300-13 6.900z" fill="url(#hr)" stroke="#2a2a2a" stroke-width="1.200" stroke-linejoin="round"/><path d="M23.200 220.500l6.500-6.500 9.300 12.400" fill="none" stroke="#2a2a2a" stroke-width="1.800" stroke-linejoin="round"/><path d="M29.400 226.400l3.100 1v6.200l-3.100-1.100z" fill="#444" stroke="#222" stroke-width="0.600"/></svg>
<div class="a" style="left:3px;top:262px;width:172px;height:22px;background:#e5e5e5;border:1px solid #adadad"></div>
<div class="t" style="left:6.0px;top:265.8px;font-size:12px;color:#0a0a0a;letter-spacing:-0.23px;">3D View: {3D}</div>
<svg class="a" style="left:160px;top:268px" width="10" height="8" viewBox="0 0 10 8"><path d="M1 1.500l4 4 4-4" fill="none" stroke="#444" stroke-width="1.100"/></svg>
<svg class="a" style="left:180px;top:263px" width="18" height="17" viewBox="180 263 18 17"><g fill="#fdfdfd" stroke="#444" stroke-width="1"><path d="M181 265.500l1.500-1.500h5l0 5.500-1.500 1.500h-5z"/><path d="M189 265.500l1.500-1.500h5v5.500l-1.500 1.500h-5z" stroke-dasharray="0"/><path d="M181 273.500l1.500-1.500h5v5.500l-1.500 1.500h-5z"/></g><rect x="188.800" y="269.500" width="8" height="9.500" rx="0.800" fill="#fbfbfb" stroke="#333" stroke-width="1"/><rect x="190.500" y="271.300" width="4.500" height="1.800" fill="#1e63c8"/><path d="M190.500 275.800h4M193.300 274.600l1.300 1.200-1.300 1.200" stroke="#555" stroke-width="0.700" fill="none"/></svg>
<div class="t" style="left:202.5px;top:264.3px;font-size:12px;color:#0a0a0a;letter-spacing:-0.41px;">Edit Type</div>
<div class="a" style="left:240px;top:285px;width:17px;height:392px;background:#f0f0f0"></div>
<div class="a" style="left:241px;top:302px;width:15px;height:219px;background:#c2c2c2"></div>
<svg class="a" style="left:243px;top:290px" width="12" height="8" viewBox="0 0 12 8"><path d="M1.500 6.500l4.200-4.200 4.200 4.200" fill="none" stroke="#444" stroke-width="1.600"/></svg>
<svg class="a" style="left:243px;top:665px" width="12" height="8" viewBox="0 0 12 8"><path d="M1.500 1.500l4.200 4.200 4.200-4.200" fill="none" stroke="#444" stroke-width="1.600"/></svg>
<div class="ghead" style="top:285px"></div>
<div class="t" style="left:4.6px;top:287.3px;font-size:12px;color:#0a0a0a;letter-spacing:-0.37px;">Graphics</div>
<svg class="a" style="left:227px;top:289px" width="8" height="10" viewBox="0 0 8 10"><path d="M1.300 4.300l2.700-2.700 2.700 2.700M1.300 8.600l2.700-2.700 2.700 2.700" fill="none" stroke="#0a0a0a" stroke-width="1.600"/></svg>
<div class="row" style="top:303px;height:18px"></div>
<div class="t" style="left:10.4px;top:304.0px;font-size:12px;color:#0a0a0a;letter-spacing:-0.52px;">View Scale</div>
<div class="a" style="left:121px;top:303px;width:119px;height:17px;background:#fff;border:2px solid #111"></div>
<div class="t" style="left:126.800px;top:304.300px;font-size:12px;color:#0a0a0a;letter-spacing:-0.55px;word-spacing:0.6px">1 : 100</div>
<div class="row" style="top:321px;height:18px"></div>
<div class="t" style="left:10.4px;top:322.0px;font-size:12px;color:#8a8a8a;letter-spacing:-0.47px;">Scale Value</div>
<div class="t" style="left:123.8px;top:322.0px;font-size:12px;color:#8a8a8a;letter-spacing:-1.31px;">100</div>
<div class="t" style="left:81.5px;top:322.0px;font-size:12px;color:#8a8a8a;letter-spacing:-2.01px;">1:</div>
<div class="row" style="top:339px;height:18px"></div>
<div class="t" style="left:10.4px;top:340.0px;font-size:12px;color:#0a0a0a;letter-spacing:-0.35px;">Detail Level</div>
<div class="t" style="left:123.8px;top:340.0px;font-size:12px;color:#0a0a0a;letter-spacing:0.16px;">Medium</div>
<div class="row" style="top:357px;height:18px"></div>
<div class="t" style="left:10.4px;top:358.0px;font-size:12px;color:#0a0a0a;letter-spacing:-0.17px;">Parts Visibility</div>
<div class="t" style="left:123.8px;top:358.0px;font-size:12px;color:#0a0a0a;letter-spacing:-0.15px;">Show Original</div>
<div class="row" style="top:375px;height:18px"></div>
<div class="t" style="left:10.4px;top:376.0px;font-size:12px;color:#0a0a0a;letter-spacing:-0.08px;">Visibility/Graphics ...</div>
<div class="ebtn" style="top:376px"></div>
<div class="t" style="left:165.3px;top:376.4px;font-size:12px;color:#0a0a0a;letter-spacing:-0.38px;">Edit...</div>
<div class="row" style="top:393px;height:18px"></div>
<div class="t" style="left:10.4px;top:394.0px;font-size:12px;color:#0a0a0a;letter-spacing:-0.28px;">Graphic Display O...</div>
<div class="ebtn" style="top:394px"></div>
<div class="t" style="left:165.3px;top:394.4px;font-size:12px;color:#0a0a0a;letter-spacing:-0.38px;">Edit...</div>
<div class="row" style="top:411px;height:18px"></div>
<div class="t" style="left:10.4px;top:412.0px;font-size:12px;color:#0a0a0a;letter-spacing:-0.14px;">Discipline</div>
<div class="t" style="left:123.8px;top:412.0px;font-size:12px;color:#0a0a0a;letter-spacing:0.08px;">Coordination</div>
<div class="row" style="top:429px;height:18px"></div>
<div class="t" style="left:10.4px;top:430.0px;font-size:12px;color:#0a0a0a;letter-spacing:-0.21px;">Show Hidden Lines</div>
<div class="t" style="left:123.8px;top:430.0px;font-size:12px;color:#0a0a0a;letter-spacing:-0.23px;">By Discipline</div>
<div class="row" style="top:447px;height:18px"></div>
<div class="t" style="left:10.4px;top:448.0px;font-size:12px;color:#0a0a0a;letter-spacing:-0.17px;">Default Analysis Di...</div>
<div class="t" style="left:123.8px;top:448.0px;font-size:12px;color:#0a0a0a;letter-spacing:-0.10px;">None</div>
<div class="row" style="top:465px;height:18px"></div>
<div class="t" style="left:10.4px;top:466.0px;font-size:12px;color:#0a0a0a;letter-spacing:-0.47px;">Sun Path</div>
<div class="cb" style="top:467.5px"></div>
<div class="ghead" style="top:483px"></div>
<div class="t" style="left:4.6px;top:485.3px;font-size:12px;color:#0a0a0a;letter-spacing:-0.62px;">Extents</div>
<svg class="a" style="left:227px;top:487px" width="8" height="10" viewBox="0 0 8 10"><path d="M1.300 4.300l2.700-2.700 2.700 2.700M1.300 8.600l2.700-2.700 2.700 2.700" fill="none" stroke="#0a0a0a" stroke-width="1.600"/></svg>
<div class="row" style="top:501px;height:18px"></div>
<div class="t" style="left:10.4px;top:502.0px;font-size:12px;color:#0a0a0a;letter-spacing:-0.20px;">Crop View</div>
<div class="cb" style="top:503.5px"></div>
<div class="row" style="top:519px;height:18px"></div>
<div class="t" style="left:10.4px;top:520.0px;font-size:12px;color:#0a0a0a;letter-spacing:-0.17px;">Crop Region Visible</div>
<div class="cb" style="top:521.5px"></div>
<div class="row" style="top:537px;height:18px"></div>
<div class="t" style="left:10.4px;top:538.0px;font-size:12px;color:#0a0a0a;letter-spacing:0.09px;">Annotation Crop</div>
<div class="cb" style="top:539.5px"></div>
<div class="row" style="top:555px;height:18px"></div>
<div class="t" style="left:10.4px;top:556.0px;font-size:12px;color:#0a0a0a;letter-spacing:-0.10px;">Far Clip Active</div>
<div class="cb" style="top:557.5px"></div>
<div class="row" style="top:573px;height:18px"></div>
<div class="t" style="left:10.4px;top:574.0px;font-size:12px;color:#8a8a8a;letter-spacing:-0.20px;">Far Clip Offset</div>
<div class="t" style="left:123.8px;top:574.0px;font-size:12px;color:#8a8a8a;letter-spacing:-0.78px;">304800.0</div>
<div class="row" style="top:591px;height:18px"></div>
<div class="t" style="left:10.4px;top:592.0px;font-size:12px;color:#0a0a0a;letter-spacing:-0.35px;">Section Box</div>
<div class="cb" style="top:593.5px"></div>
<div class="ghead" style="top:609px"></div>
<div class="t" style="left:4.6px;top:611.3px;font-size:12px;color:#0a0a0a;letter-spacing:-0.52px;">Camera</div>
<svg class="a" style="left:227px;top:613px" width="8" height="10" viewBox="0 0 8 10"><path d="M1.300 4.300l2.700-2.700 2.700 2.700M1.300 8.600l2.700-2.700 2.700 2.700" fill="none" stroke="#0a0a0a" stroke-width="1.600"/></svg>
<div class="row" style="top:627px;height:18px"></div>
<div class="t" style="left:10.4px;top:628.0px;font-size:12px;color:#0a0a0a;letter-spacing:-0.21px;">Rendering Settings</div>
<div class="ebtn" style="top:628px"></div>
<div class="t" style="left:165.3px;top:628.4px;font-size:12px;color:#0a0a0a;letter-spacing:-0.38px;">Edit...</div>
<div class="row" style="top:645px;height:18px"></div>
<div class="t" style="left:10.4px;top:646.0px;font-size:12px;color:#8a8a8a;letter-spacing:-0.04px;">Locked Orientation</div>
<div class="cb cbd" style="top:647.5px"></div>
<div class="a" style="left:2px;top:663px;width:238px;height:14px;background:#fff;overflow:hidden"><div class="cb cbd" style="left:122px;top:2.500px"></div></div>
<div class="t" style="left:10.6px;top:664.0px;font-size:12px;color:#8a8a8a;letter-spacing:-0.33px;clip-path:inset(0 0 1px 0);">Perspective</div>
<div class="a" style="left:120px;top:303px;width:1px;height:180px;border-left:1px dotted #555"></div>
<div class="a" style="left:120px;top:501px;width:1px;height:108px;border-left:1px dotted #555"></div>
<div class="a" style="left:120px;top:627px;width:1px;height:50px;border-left:1px dotted #555"></div>
<div class="a" style="left:239px;top:303px;width:1px;height:180px;border-left:1px dotted #555"></div>
<div class="a" style="left:239px;top:501px;width:1px;height:108px;border-left:1px dotted #555"></div>
<div class="a" style="left:239px;top:627px;width:1px;height:50px;border-left:1px dotted #555"></div>
<div class="t" style="left:4.4px;top:681.6px;font-size:12px;color:#0563c1;letter-spacing:-0.15px;text-decoration:underline;">Properties help</div>
<div class="a" style="left:182px;top:679px;width:73px;height:21px;background:#cccccc;border:1px solid #bfbfbf"></div>
<div class="t" style="left:203.0px;top:683.0px;font-size:12px;color:#838383;letter-spacing:0.17px;">Apply</div>
<!-- 3D VIEW -->
<svg id="viewsvg" class="a" style="left:0;top:0" width="1227" height="730" viewBox="0 0 1227 730">
<defs>
<clipPath id="vc"><rect x="265" y="168" width="930" height="517"/></clipPath>
<linearGradient id="hg" x1="0" x2="1" y1="0" y2="0"><stop offset="0" stop-color="#2a2c2f"/><stop offset="0.45" stop-color="#4a4d52"/><stop offset="0.7" stop-color="#5a5d62"/><stop offset="1" stop-color="#2e3033"/></linearGradient>
</defs>
<rect x="263" y="166" width="950" height="537" fill="#7f7f7f"/>
<g clip-path="url(#vc)">
<rect x="265" y="168" width="930" height="517" fill="#ffffff"/>
<!-- floor brown -->
<polygon points="403,600 1195,600 1195,685 403,685" fill="#3b3121"/>
<line x1="403.500" y1="620" x2="403.500" y2="686" stroke="#000" stroke-width="1.200"/>
<!-- floor black -->
<polygon points="713.8,685.5 875.5,645 1195,660 1195,686" fill="#212121"/>
<line x1="713.8" y1="685.5" x2="876" y2="644.8" stroke="#000" stroke-width="1"/>
<line x1="601.6" y1="685" x2="752.5" y2="647" stroke="#0a0a0a" stroke-width="1"/>
<!-- red wall -->
<polygon points="877,168 1195,168 1195,662.3 877,644.9" fill="#be6f74"/>
<line x1="877" y1="644.9" x2="1195" y2="662.3" stroke="#1a1a1a" stroke-width="1"/>
<!-- yellow jamb -->
<polygon points="830,168 877,168 877,645 830,642.3" fill="#ecc67d"/>
<line x1="830.5" y1="642.5" x2="876.5" y2="645" stroke="#000" stroke-width="1"/>
<line x1="876.5" y1="168" x2="876.5" y2="645" stroke="#000" stroke-width="1.3"/>
<!-- door bottom band -->
<polygon points="265,613.2 820,643 821,644.2 793.3,650.2 265,621.8" fill="#3c2a1a" stroke="#000" stroke-width="1.500" stroke-linejoin="round"/>
<path d="M753 647.4h5M768 648.3h8M787 649.4h7" stroke="#e8c070" stroke-width="1"/>
<!-- orange door -->
<polygon points="265,168 821,168 821,643 265,613.2" fill="#eab06a"/>
<line x1="265" y1="613.2" x2="821" y2="643" stroke="#000" stroke-width="1.6"/>
<!-- dark gap strip -->
<rect x="820" y="168" width="11" height="475.5" fill="#3b3121"/>
<line x1="820.7" y1="168" x2="820.7" y2="644" stroke="#000" stroke-width="1.6"/>
<line x1="830.5" y1="168" x2="830.5" y2="643" stroke="#000" stroke-width="1.2"/>
<line x1="820" y1="643.300" x2="831" y2="642.500" stroke="#000" stroke-width="1.200"/>
<!-- wall lines -->
<line x1="877" y1="266" x2="1195" y2="283.5" stroke="#000" stroke-width="1.2"/>
<line x1="877" y1="455.3" x2="1195" y2="472.3" stroke="#000" stroke-width="1.2"/>
<line x1="1135.5" y1="280" x2="1135.5" y2="469" stroke="#000" stroke-width="1.2"/>
<!-- hinge -->
<rect x="816" y="262" width="7.500" height="204" fill="#2b2d30"/>
<rect x="817.300" y="299.9" width="5.700" height="43.6" fill="#5d6166" stroke="#111" stroke-width="0.900"/>
<rect x="817.300" y="383.5" width="5.700" height="42.5" fill="#5d6166" stroke="#111" stroke-width="0.900"/>
<path d="M816 264.2l6.500 -3v36.8h-6.500z" fill="#33363a" stroke="#0b0b0b" stroke-width="1" stroke-linejoin="round"/>
<line x1="820.500" y1="267.2" x2="820.500" y2="294.0" stroke="#15171a" stroke-width="1.200" stroke-dasharray="1 1"/>
<rect x="822" y="260.2" width="18" height="37.8" rx="2.200" fill="url(#hg)" stroke="#0b0b0b" stroke-width="1"/>
<rect x="823.500" y="303.4" width="16.500" height="36.6" rx="2.200" fill="url(#hg)" stroke="#0b0b0b" stroke-width="1"/>
<path d="M816 349.0l6.500 -3v35.4h-6.500z" fill="#33363a" stroke="#0b0b0b" stroke-width="1" stroke-linejoin="round"/>
<line x1="820.500" y1="352.0" x2="820.500" y2="377.4" stroke="#15171a" stroke-width="1.200" stroke-dasharray="1 1"/>
<rect x="822" y="345" width="18" height="36.4" rx="2.200" fill="url(#hg)" stroke="#0b0b0b" stroke-width="1"/>
<rect x="823.500" y="387" width="16.500" height="35.5" rx="2.200" fill="url(#hg)" stroke="#0b0b0b" stroke-width="1"/>
<path d="M816 432.7l6.500 -3v36.3h-6.500z" fill="#33363a" stroke="#0b0b0b" stroke-width="1" stroke-linejoin="round"/>
<line x1="820.500" y1="435.7" x2="820.500" y2="462.0" stroke="#15171a" stroke-width="1.200" stroke-dasharray="1 1"/>
<rect x="822" y="428.7" width="18" height="37.3" rx="2.200" fill="url(#hg)" stroke="#0b0b0b" stroke-width="1"/>
<rect x="825.500" y="298" width="11" height="5.4" fill="url(#hg)" stroke="#0b0b0b" stroke-width="0.800"/>
<rect x="825.500" y="340" width="11" height="5.0" fill="url(#hg)" stroke="#0b0b0b" stroke-width="0.800"/>
<rect x="825.500" y="381.4" width="11" height="5.6" fill="url(#hg)" stroke="#0b0b0b" stroke-width="0.800"/>
<rect x="825.500" y="422.5" width="11" height="6.2" fill="url(#hg)" stroke="#0b0b0b" stroke-width="0.800"/>
<line x1="816.400" y1="263" x2="816.400" y2="466" stroke="#0b0b0b" stroke-width="1.300"/>
<!-- viewcube -->
<polygon points="1108,246 1121,239.5 1121,277.5 1108,277.5" fill="#caa0a3" stroke="#a08a8c" stroke-width="0.7"/>
<polygon points="1121,239.5 1153.5,243.5 1153.5,277.5 1121,277.5" fill="#cca3a6" stroke="#a08a8c" stroke-width="0.7"/>
<text x="1137.5" y="263" font-family="Liberation Sans, sans-serif" font-size="9.500" font-weight="bold" fill="#866a6f" text-anchor="middle" textLength="19.500" lengthAdjust="spacingAndGlyphs">BACK</text>
<path d="M1110.500 265v-4l1.500-1M1113.500 262.500l1-0.500M1116 265v-5.500l2-1.500v2" stroke="#8d7074" stroke-width="1.300" fill="none"/>
<path d="M1082 280h14M1110 281.500h36M1160 280h10" stroke="#caa3a6" stroke-width="0.800" opacity="0.700"/>
<!-- window controls -->
<g stroke="#2d2d2d" stroke-width="0.8" fill="#f4f4f4">
<rect x="1144" y="182.5" width="12" height="3.5"/>
<path d="M1164.5 176.5h8v8h-2v2.500h-8v-8.500h2z"/>
<rect x="1165" y="181" width="3" height="3.500" fill="#2d2d2d" stroke="none"/>
<path d="M1181 178l9 8.500M1190 178l-9 8.500" stroke="#2d2d2d" stroke-width="3.600" fill="none"/><path d="M1181 178l9 8.500M1190 178l-9 8.500" stroke="#f6f6f6" stroke-width="2" fill="none"/>
</g>
<!-- red annotation -->
<path d="M884.7 491.6C885.5 490.1 888.1 485.8 889.7 482.4C891.4 479.0 893.2 475.6 894.6 471.3C896.0 467.0 897.4 461.9 898.3 456.6C899.2 451.3 899.6 446.3 900.0 439.3C900.4 432.3 900.5 422.0 900.7 414.6C901.0 407.2 901.2 400.3 901.5 395.0C901.8 389.7 902.0 388.9 902.5 382.7C903.0 376.5 903.8 366.6 904.4 358.0C905.0 349.4 905.9 338.3 906.2 330.9C906.5 323.5 906.5 319.9 906.2 313.7C905.9 307.5 905.3 300.9 904.4 293.9C903.5 286.9 902.3 278.4 900.7 271.8C899.1 265.2 897.1 259.6 894.6 254.5C892.1 249.4 888.9 244.1 886.0 241.0C883.1 237.9 881.2 237.7 877.3 236.0C873.4 234.3 867.4 231.6 862.5 230.6C857.6 229.6 853.1 229.8 847.8 229.9C842.5 230.0 836.3 230.3 830.5 231.1C824.7 231.9 820.2 232.8 813.2 234.8C806.2 236.9 796.8 240.5 788.6 243.4C780.4 246.3 769.5 249.7 764.0 252.0C758.5 254.3 759.4 253.1 755.3 257.0C751.2 260.9 744.0 270.0 739.3 275.5C734.6 281.0 731.1 285.1 727.0 290.2C722.9 295.3 718.1 300.8 714.6 306.3C711.1 311.9 708.2 317.4 706.0 323.5C703.8 329.6 702.1 335.8 701.1 343.2C700.1 350.6 699.9 359.3 699.9 367.9C699.9 376.5 700.5 388.9 701.1 395.0C701.7 401.1 702.4 400.3 703.6 404.8C704.8 409.3 706.7 416.9 708.5 422.0C710.3 427.1 711.5 430.5 714.6 435.6C717.7 440.8 722.9 446.9 727.0 452.9C731.1 458.8 735.2 465.1 739.3 471.3C743.4 477.5 747.5 483.6 751.6 489.8C755.7 496.0 759.8 502.6 763.9 508.3C768.0 514.0 772.2 519.6 776.3 524.3C780.4 529.0 784.5 533.2 788.6 536.7C792.7 540.2 796.8 543.0 800.9 545.3C805.0 547.5 809.1 549.3 813.2 550.2C817.3 551.1 820.7 551.0 825.6 550.7C830.5 550.4 837.0 549.4 842.8 548.5C848.5 547.6 855.6 546.6 860.1 545.3C864.6 543.9 866.2 543.1 869.9 540.4C873.6 537.7 878.2 533.0 882.3 529.3C886.4 525.6 891.5 521.7 894.6 518.2C897.7 514.7 899.1 512.0 900.7 508.3C902.3 504.6 903.6 499.3 904.4 496.0C905.1 492.7 905.4 490.9 905.2 488.6C905.0 486.3 904.0 484.1 903.2 482.4C902.4 480.7 900.8 478.9 900.3 478.2" fill="none" stroke="#ff0000" stroke-width="1.900" stroke-linecap="round" stroke-linejoin="round"/>
</g>
</svg>
<!-- STATUS BAR -->
<div class="a" style="left:265px;top:685px;width:947px;height:18px;background:#f0f0f0"></div>
<div class="a" style="left:1195px;top:168px;width:17px;height:517px;background:#f0f0f0"></div>
<div class="a" style="left:1196px;top:418px;width:15px;height:17px;background:#cdcdcd"></div>
<div class="a" style="left:907px;top:687px;width:17px;height:14px;background:#cdcdcd"></div>
<div class="a" style="left:0;top:703px;width:1227px;height:1px;background:#8e8e8e"></div>
<div class="a" id="status" style="top:704px;height:24px;border-top:1px solid #fdfdfd"></div>
<div class="a" style="left:924px;top:705px;width:219px;height:23px;background:linear-gradient(90deg,rgba(150,150,150,0.35),rgba(200,200,200,0.15) 60%,rgba(255,255,255,0))"></div>
<div class="a" id="botstrip"></div>
<div class="t" style="left:2.8px;top:709.7px;font-size:12px;color:#000;letter-spacing:-0.42px;">Click</div>
<div class="t" style="left:31.1px;top:709.7px;font-size:12px;color:#000;letter-spacing:0.29px;">to</div>
<div class="t" style="left:45.6px;top:709.7px;font-size:12px;color:#000;letter-spacing:-0.55px;">select,</div>
<div class="t" style="left:81.6px;top:709.7px;font-size:12px;color:#000;letter-spacing:-1.22px;">TAB</div>
<div class="t" style="left:105.5px;top:709.7px;font-size:12px;color:#000;letter-spacing:-0.55px;">for</div>
<div class="t" style="left:123.8px;top:709.7px;font-size:12px;color:#000;letter-spacing:-0.55px;">alternates,</div>
<div class="t" style="left:180.4px;top:709.7px;font-size:12px;color:#000;letter-spacing:-1.55px;">CTRL</div>
<div class="t" style="left:211.4px;top:709.7px;font-size:12px;color:#000;letter-spacing:-0.76px;">adds,</div>
<div class="t" style="left:242.3px;top:709.7px;font-size:12px;color:#000;letter-spacing:-1.17px;">SHIFT</div>
<div class="t" style="left:277.0px;top:709.7px;font-size:12px;color:#000;letter-spacing:-0.38px;">unselects.</div>
<div class="t" style="left:289.3px;top:686.7px;font-size:12px;color:#000;letter-spacing:0.00px;">1</div>
<div class="t" style="left:298.3px;top:686.7px;font-size:12px;color:#000;letter-spacing:0.00px;">:</div>
<div class="t" style="left:304.8px;top:686.7px;font-size:12px;color:#000;letter-spacing:-1.26px;">100</div>
<div class="a" style="left:451px;top:707px;width:204px;height:21px;background:#fff;border:1px solid #e0e0e0"></div>
<div class="a" style="left:766px;top:706px;width:156px;height:22px;background:#fff;border:1px solid #e0e0e0"></div>
<div class="t" style="left:769.6px;top:709.5px;font-size:12px;color:#6d6d6d;letter-spacing:0.12px;">Main Model</div>
<div class="t" style="left:683.0px;top:710.6px;font-size:12px;color:#111;letter-spacing:0.00px;">:</div>
<div class="t" style="left:686.3px;top:710.6px;font-size:12px;color:#111;letter-spacing:0.00px;">0</div>
<div class="a" style="left:1218px;top:166px;width:9px;height:18px;background:#bfcddb"></div>
<div class="a" style="left:1218px;top:186px;width:9px;height:517px;background:#fff;border-left:2px solid #828282;border-top:1px solid #828282"></div>
<div class="a" style="left:1220px;top:687px;width:7px;height:16px;background:#f0f0f0"></div>
<div class="t" style="left:1222.0px;top:169.0px;font-size:12px;color:#0a0a0a;letter-spacing:0.00px;">P</div>
<div class="a" style="left:1224px;top:194px;width:5px;height:9px;border:1px solid #8a8a8a;background:#fff"></div>
<div class="a" style="left:1212px;top:166px;width:6px;height:537px;background:#f0f0f0"></div>
<div class="a" style="left:259px;top:166px;width:4px;height:537px;background:#f0f0f0"></div>
<div class="a" style="left:422px;top:706px;width:2px;height:21px;background:#fbfbfb;border-left:1px solid #dcdcdc"></div>
<div class="a" style="left:658px;top:706px;width:2px;height:21px;background:#fbfbfb;border-left:1px solid #dcdcdc"></div>
<div class="a" style="left:711px;top:706px;width:2px;height:21px;background:#fbfbfb;border-left:1px solid #dcdcdc"></div>
<div class="a" style="left:737px;top:706px;width:2px;height:21px;background:#fbfbfb;border-left:1px solid #dcdcdc"></div>
<div class="a" style="left:1142px;top:706px;width:2px;height:21px;background:#fbfbfb;border-left:1px solid #dcdcdc"></div>
<div class="a" style="left:1167px;top:706px;width:2px;height:21px;background:#fbfbfb;border-left:1px solid #dcdcdc"></div>
<div class="a" style="left:1192px;top:706px;width:2px;height:21px;background:#fbfbfb;border-left:1px solid #dcdcdc"></div>
<div class="a" style="left:1218px;top:706px;width:2px;height:21px;background:#fbfbfb;border-left:1px solid #dcdcdc"></div>
<svg class="a" style="left:0;top:0" width="1227" height="730" viewBox="0 0 1227 730">
<path d="M1199.9 178.8l3.6 -3.6 3.6 3.6" fill="none" stroke="#404040" stroke-width="2"/>
<path d="M1199.9 674.8000000000001l3.6 3.6 3.6 -3.6" fill="none" stroke="#404040" stroke-width="2"/>
<path d="M645.8000000000001 690.4l-3.2 3.2 3.2 3.2" fill="none" stroke="#404040" stroke-width="1.9"/>
<path d="M1185.1000000000001 690.4l3.2 3.2 -3.2 3.2" fill="none" stroke="#404040" stroke-width="1.9"/>
<path d="M1207 692.500h2M1204 695.500h2M1207 695.500h2M1201 698.500h2M1204 698.500h2M1207 698.500h2" stroke="#b8b8b8" stroke-width="2"/>
<path d="M1226.500 690.500l-3.500 3 3.500 3z" fill="#444"/>
<rect x="344.800" y="687.100" width="14.500" height="10" rx="0.800" fill="#f4f4f4" stroke="#2c2c2c" stroke-width="1.100"/><path d="M345.500 688h4.500v3h-4.500zM354.500 688h4.500v3h-4.500zM350 691h4.500v3h-4.500zM345.500 694h4.500v2.500h-4.500zM354.500 694h4.500v2.500h-4.500z" fill="#8c8c8c"/><path d="M350 688h4.500v3h-4.500z" fill="#cfcfcf"/>
<path d="M366.500 691l3-3.300h10.800v7l-3 3.500h-10.800z" fill="#a9d5ef" stroke="#0a70d0" stroke-width="1.200" stroke-linejoin="round"/><path d="M366.500 691h10.800l3-3.300M377.300 691v7.200" fill="none" stroke="#0a70d0" stroke-width="1"/><path d="M366.500 691l3-3.300h10.800l-3 3.300z" fill="#d9edf9"/>
<circle cx="390.500" cy="692" r="3.400" fill="#f8c050" stroke="#e89818" stroke-width="0.800"/><path d="M390.500 686v2M390.500 696v2M384.500 692h2M394.500 692h2M386.300 687.800l1.400 1.400M394.700 687.800l-1.400 1.400M386.300 696.200l1.400-1.400" stroke="#e89818" stroke-width="0.900"/><path d="M393.500 692.500l6 6M399.500 692.500l-6 6" stroke="#e2501c" stroke-width="1.800"/>
<circle cx="414.500" cy="691.500" r="4.300" fill="#d9edf9" stroke="#0a70d0" stroke-width="1.100"/><path d="M409.500 698h7" stroke="#444" stroke-width="1.600"/><path d="M415.500 693l6 6M421.500 693l-6 6" stroke="#e2501c" stroke-width="1.800"/>
<path d="M427.300 689.500l3 1.200q1-1.500 4-1.500t4 1.500q1.800 3-0.500 6h-7q-1.500-1.700-1.500-4z" fill="#f4f4f4" stroke="#777" stroke-width="0.900" stroke-linejoin="round"/><path d="M432.800 689.200v-1.500h3" stroke="#777" stroke-width="0.900" fill="none"/><circle cx="440" cy="692.800" r="2.800" fill="#d9edf9" stroke="#0a70d0" stroke-width="1"/><path d="M439 695.800h2v2h-2z" fill="#555"/>
<path d="M451.500 697v-7h10.500M454 697v-4.500h8" fill="none" stroke="#0a70d0" stroke-width="1.100"/><path d="M448.500 694h2.500M457.500 686.800h2" stroke="#333" stroke-width="1"/><path d="M456 691.500l6 6M462 691.500l-6 6" stroke="#e2501c" stroke-width="1.800"/>
<path d="M472.500 697v-7h6.500M475 697v-4.500h4" fill="none" stroke="#0a70d0" stroke-width="1.100"/><path d="M469.500 694h2.500M478.500 686.800h2" stroke="#333" stroke-width="1"/><path d="M476 694.200h3" stroke="#e2501c" stroke-width="1.200"/><circle cx="481.800" cy="691.300" r="2.700" fill="#d9edf9" stroke="#0a70d0" stroke-width="1"/><path d="M480.800 694.300h2v2.500h-2z" fill="#555"/>
<path d="M491 691.500l5.500-5 7.500 4v7.500l-6 0-4.500-2.500v-4z" fill="#f6f6f6" stroke="#444" stroke-width="1" stroke-linejoin="round"/><path d="M496.500 686.500l2.500 5.500M493.500 692.500v5" stroke="#444" stroke-width="0.900" fill="none"/><rect x="498.500" y="694.500" width="6.500" height="4.800" fill="#e8eef4" stroke="#0a70d0" stroke-width="1"/><path d="M500 694.500v-1.500q1.700-1.800 3.500 0v1.500" fill="none" stroke="#444" stroke-width="1"/>
<path d="M511.500 689.500l3 4.500q2.500 2.500 5-0.500l0.500-1.500q1-0.800 2 0.200M527 692.500q-1-4.500-5-5" fill="none" stroke="#333" stroke-width="1"/><ellipse cx="517" cy="693.800" rx="2.700" ry="2.200" fill="#d9edf9" stroke="#333" stroke-width="0.900"/><ellipse cx="524" cy="692.500" rx="2.700" ry="2.200" fill="#f4f4f4" stroke="#333" stroke-width="0.900"/>
<circle cx="540" cy="692" r="2.800" fill="#d9edf9" stroke="#0a70d0" stroke-width="1"/><path d="M539 695h2v2.500h-2z" fill="#666"/>
<rect x="555" y="688.500" width="12.500" height="9" rx="1" fill="#f4f4f4" stroke="#222" stroke-width="1.300" stroke-dasharray="2 1"/><rect x="562.300" y="692" width="4.400" height="4" fill="#fff" stroke="#222" stroke-width="0.900"/><circle cx="564.500" cy="694" r="0.900" fill="#222"/>
<path d="M575 697.500v-5.500l5-4.500 6 2M577.500 697.500v-6l5-4M580 697.500v-6.500l4-3M575 692h8.500M575 694.500h8.500" fill="none" stroke="#444" stroke-width="0.800"/><path d="M578.800 692.500v5.500M581 692.500v5.500" stroke="#d8401c" stroke-width="0.900"/><circle cx="587.200" cy="691.300" r="2.700" fill="#d9edf9" stroke="#0a70d0" stroke-width="1"/><path d="M586.200 694.300h2v2.500h-2z" fill="#555"/>
<path d="M598.500 692l2.500-3h8.500v6l-2.500 3.300h-8.500z" fill="#ececec" stroke="#666" stroke-width="0.900" stroke-linejoin="round"/><path d="M598.500 692h8.500l2.500-3M607 692v6.300M596 694.500h6M601 690.500h5" fill="none" stroke="#666" stroke-width="0.900"/>
<path d="M616.300 685v14.500M631.800 685v14.500" stroke="#333" stroke-width="1" stroke-dasharray="3 1.500"/><path d="M617 687h14" stroke="#222" stroke-width="1"/><path d="M616.500 687l2.500-1.700v3.400zM631.500 687l-2.500-1.700v3.400z" fill="#222"/><path d="M617 695.500h7" stroke="#999" stroke-width="0.800" stroke-dasharray="1.500 1"/><rect x="625.500" y="694" width="6" height="5" fill="#e8e8e8" stroke="#333" stroke-width="1"/><path d="M627 694v-1.500q1.500-1.800 3 0v1.500" fill="none" stroke="#333" stroke-width="1"/>
<path d="M431.500 711.500l1.500-2h5.500l0.500 2v6.500h-7.500z" fill="#f0eedc" stroke="#3a2a10" stroke-width="1.100" stroke-linejoin="round"/><path d="M433 711.500h4l1.500-1.500M435 711.500v5" stroke="#fff" stroke-width="1.200" fill="none"/>
<path d="M427.500 717l1.500-1.800h5l1.200 1.800v6.500l-1.500 1.500h-4.700l-1.500-1.500z" fill="#bfe0f6" stroke="#0a6ad0" stroke-width="1.300" stroke-linejoin="round"/><path d="M429 717h5.500M431.500 717v7" stroke="#fff" stroke-width="1.300" fill="none"/>
<path d="M437.800 714.300q-1.200 1.600 0 3.200l0.900 0.800v5.500q1.300 1.300 2.600 0v-5.500l0.900-0.800q1.200-1.600 0-3.200l-0.700 0v2h-3v-2z" fill="#fbfbfb" stroke="#103a90" stroke-width="1.100" stroke-linejoin="round"/>
<path d="M644.2 715.6l3.8 3.8 3.8 -3.8" fill="none" stroke="#8a8a8a" stroke-width="1.1"/>
<path d="M910.0 715.6l3.8 3.8 3.8 -3.8" fill="none" stroke="#8a8a8a" stroke-width="1.1"/>
<path d="M667.500 710h10.500q1 0 1 1v4.500q0 1-1 1h-4.500l-4 3.500-1.500-1.500 3-3h-3.500q-1 0-1-1v-3.500q0-1 1-1z" fill="#a2a2a2"/><path d="M668.800 712h8v2.500h-8z" fill="#e8e8e8"/><path d="M664 725q0.300-4.500 3-6l4 0.500q1.500 2.500 2 5.500z" fill="#a2a2a2"/><path d="M669 717.500l3.500-2.500" stroke="#e0e0e0" stroke-width="1"/>
<rect x="717.700" y="709.800" width="14.600" height="14.600" rx="1.500" fill="#fbfbfb" stroke="#2a2e34" stroke-width="1.400"/><path d="M717.700 711.800h14.600" stroke="#2a2e34" stroke-width="1.200"/><rect x="719.700" y="713.800" width="2.600" height="2.600" fill="#fff" stroke="#2a2e34" stroke-width="0.900"/><path d="M722.500 717.800h2v2h-2zM722.500 720.800h2v2h-2z" fill="#2a2e34"/><path d="M724.500 715.200h6M726 718.800h4.500M726 721.800h4.500" stroke="#2a2e34" stroke-width="1.100"/>
<rect x="744" y="709" width="14.200" height="13.700" fill="#9d9d9d"/><path d="M743 718.500h6.500v-2.500l4 4-4 4v-2.500h-6.500z" fill="#d8d8d8"/><path d="M745.500 711v1M747.500 714v1" stroke="#e8e8e8" stroke-width="1"/>
<path d="M1150.500 713.500q-3.500-0.500-3.800 2 0.300 2.500 3.800 2M1151 712h3.500" fill="none" stroke="#e8961c" stroke-width="1.500"/><path d="M1155.500 709.500l6 6M1161.500 709.500l-6 6" stroke="#e2501c" stroke-width="1.800"/><path transform="translate(1152.5 713) scale(1)" d="M0 0v10.500l2.400-2.200 1.700 4 1.700-0.700-1.700-3.900h3.200z" fill="#fff" stroke="#2a2a2a" stroke-width="0.900" stroke-linejoin="round"/>
<path d="M1178 710.500h9.500l-2.500 3h2.500l-2.500 3h2.500l-4 4.500h-9.500l4-4.500h-2.500l2.500-3h-2.500z" fill="#d9edf9" stroke="#0a70d0" stroke-width="1" stroke-linejoin="round"/><path transform="translate(1181.5 713) scale(1)" d="M0 0v10.500l2.400-2.200 1.700 4 1.700-0.700-1.700-3.900h3.200z" fill="#fff" stroke="#2a2a2a" stroke-width="0.900" stroke-linejoin="round"/>
<path d="M1199.500 710.500h8v2l-1 0.500v4l1.500 0.800v1.700h-9v-1.700l1.500-0.800v-4l-1-0.500z" fill="#f8b070" stroke="#e2601c" stroke-width="1" stroke-linejoin="round"/><path d="M1201 713.500h5M1201 716h5" stroke="#fff0d8" stroke-width="1"/><path d="M1203.500 719.500v5" stroke="#333" stroke-width="1.100"/><path transform="translate(1207.5 713) scale(1)" d="M0 0v10.500l2.400-2.200 1.700 4 1.700-0.700-1.700-3.900h3.200z" fill="#fff" stroke="#2a2a2a" stroke-width="0.900" stroke-linejoin="round"/>
<rect x="1225" y="712" width="4" height="9" fill="#d9edf9" stroke="#0a70d0" stroke-width="1.300"/>
</svg>
</body>
</html>
